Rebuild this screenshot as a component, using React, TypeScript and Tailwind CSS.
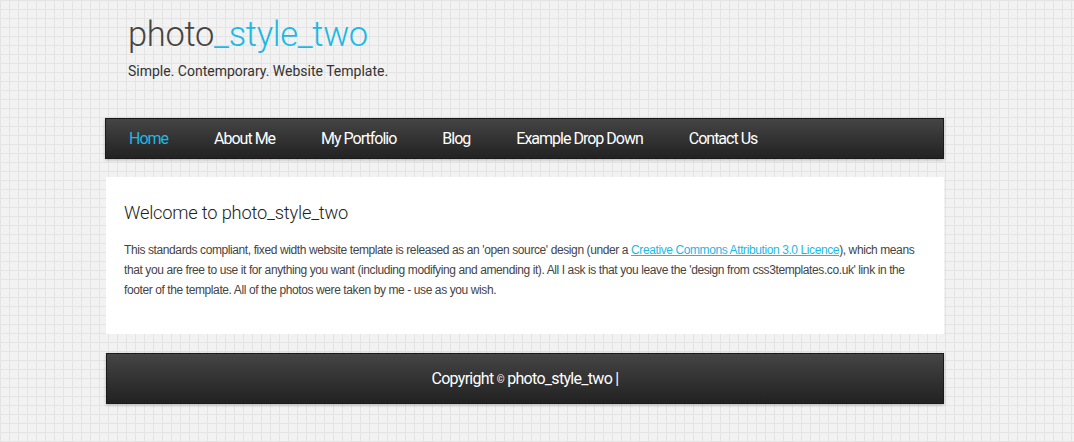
const navItems = ['Home', 'About Me', 'My Portfolio', 'Blog', 'Example Drop Down', 'Contact Us'];

export default function App() {
  return (
    <div
      className="min-h-screen w-full bg-[#f2f2f2] bg-[linear-gradient(to_right,#e4e4e4_1px,transparent_1px),linear-gradient(to_bottom,#e4e4e4_1px,transparent_1px)] bg-[size:9px_9px] pb-[38px]"
    >
      <div className="ml-[105px] w-[839px]">
        {/* header */}
        <header className="pl-[23px] pt-[12px] h-[118px]">
          <h1 className="font-['Roboto',sans-serif] font-light text-[34.5px] leading-[44px] tracking-[-0.3px] text-[#444]">
            photo<span className="text-[#1cb8e6]">_style_two</span>
          </h1>
          <p className="font-['Roboto',sans-serif] text-[14px] leading-[18px] mt-[6px] text-[#333] tracking-[0px]">
            Simple. Contemporary. Website Template.
          </p>
        </header>

        {/* menu */}
        <nav className="h-[41px] border border-[#1a1a1a] bg-gradient-to-b from-[#454545] to-[#222] shadow-[0_1px_3px_rgba(0,0,0,0.25)] flex items-center">
          {navItems.map((item, i) => (
            <a
              key={item}
              href="#"
              className={`px-[23px] font-['Roboto',sans-serif] text-[16px] tracking-[-1px] leading-[41px] ${
                i === 0 ? 'text-[#1cb8e6]' : 'text-white'
              }`}
            >
              {item}
            </a>
          ))}
        </nav>

        {/* content */}
        <div className="ml-px mt-[18px] bg-white h-[157px] px-[18px] pt-[23px]">
          <h2 className="font-['Roboto',sans-serif] font-light text-[18.3px] leading-[26px] text-[#222] tracking-[-0.2px]">
            Welcome to photo_style_two
          </h2>
          <p className="mt-[14px] font-['Liberation_Sans',Arial,sans-serif] text-[12px] tracking-[-0.4px] leading-[20px] text-[#444] pr-[10px]">
            This standards compliant, fixed width website template is released as an 'open source' design (under a{' '}
            <a href="#" className="text-[#1cb8e6] underline">
              Creative Commons Attribution 3.0 Licence
            </a>
            ), which means that you are free to use it for anything you want (including modifying and amending it). All I ask is that you leave the 'design from css3templates.co.uk' link in the footer of the template. All of the photos were taken by me - use as you wish.
          </p>
        </div>

        {/* footer */}
        <footer className="ml-px mt-[19px] h-[51px] border border-[#1a1a1a] bg-gradient-to-b from-[#454545] to-[#222] shadow-[0_1px_3px_rgba(0,0,0,0.25)] flex items-center justify-center">
          <p className="font-['Roboto',sans-serif] text-[16px] tracking-[-0.7px] text-white">
            Copyright <span className="text-[10px] align-middle">©</span> photo_style_two |
          </p>
        </footer>
      </div>
    </div>
  );
}
